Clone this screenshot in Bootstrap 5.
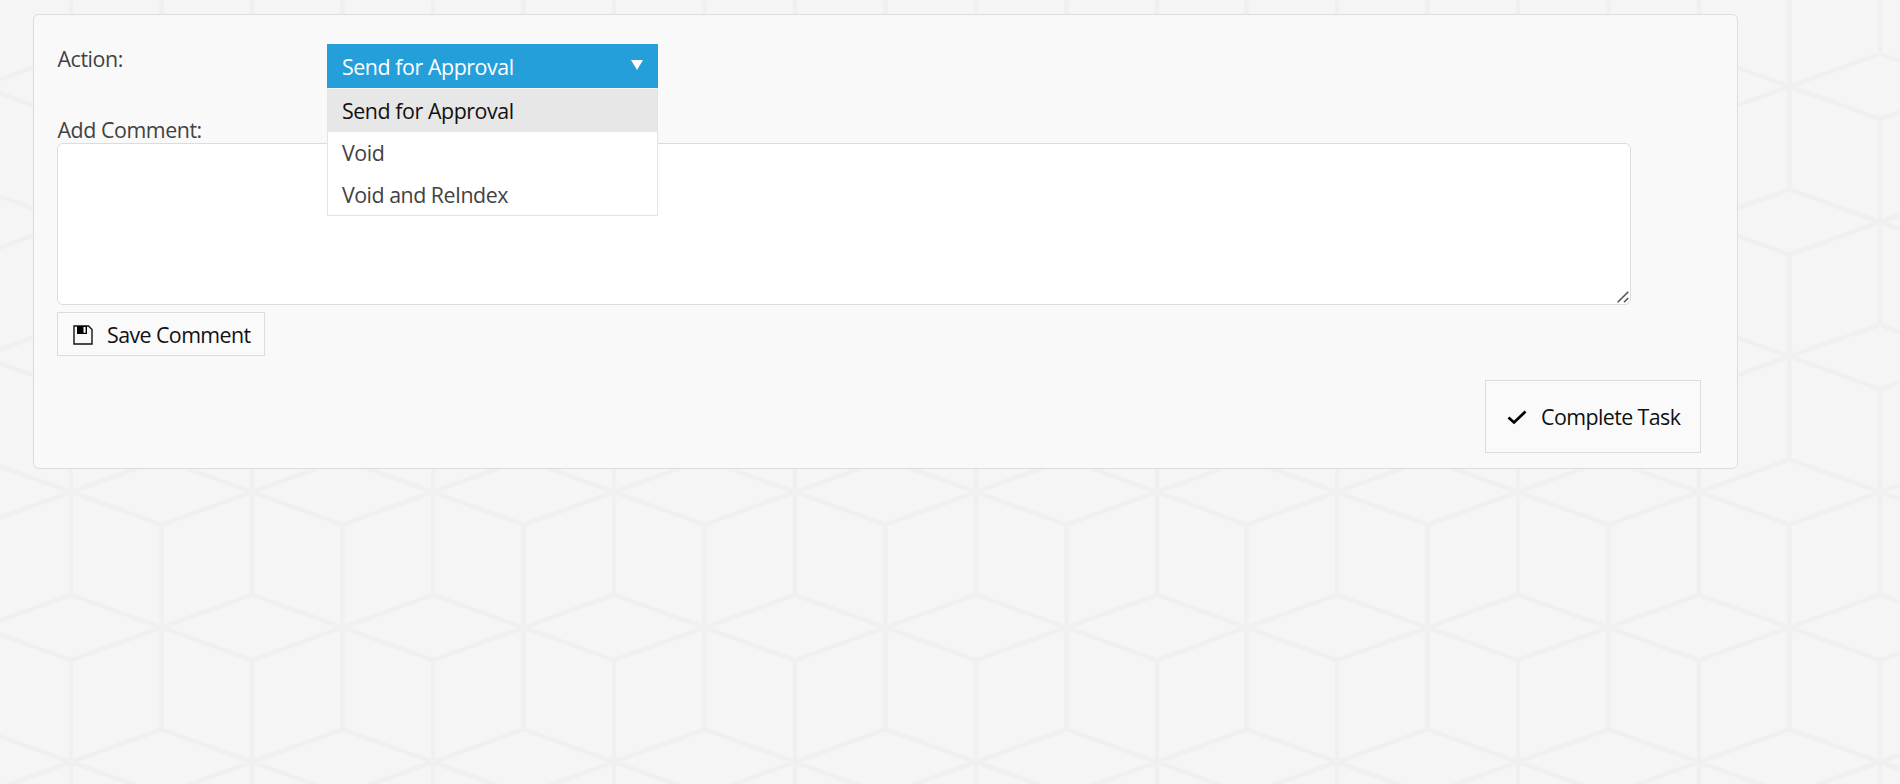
<!DOCTYPE html>
<html lang="en">
<head>
    <meta charset="UTF-8">
    <title>Complete Task</title>
    <link rel="stylesheet" href="https://cdn.jsdelivr.net/npm/bootstrap@5.3.0/dist/css/bootstrap.min.css">
    <style>
        body {
            height: 784px;
            overflow: hidden;
            font-family: "Open Sans", "Noto Sans", sans-serif;
            font-size: 21.4px;
            letter-spacing: -0.44px;
            line-height: 30px;
            color: #424242;
            /* cube pattern tile */
            background: #f5f5f5 url("data:image/svg+xml,%3Csvg xmlns='http://www.w3.org/2000/svg' width='180.9' height='270.3' viewBox='0 0 180.9 270.3'%3E%3Cg fill='none' stroke='%23f0f0f0' stroke-width='4.5'%3E%3Cpath d='M0 0L90.45 32.5L180.9 0M0 270.3L90.45 237.8L180.9 270.3M0 102.6L90.45 135.1L0 167.7M180.9 102.6L90.45 135.1L180.9 167.7'/%3E%3Cpath d='M0 0V102.6M0 167.7V270.3M180.9 0V102.6M180.9 167.7V270.3M90.45 32.5V237.8'/%3E%3C/g%3E%3C/svg%3E") 71.2px -48.5px / 180.9px 270.3px;
        }
        .task-panel {
            width: 1705px;
            height: 455px;
            margin: 14px 0 0 33px;
            padding: 29px 36px 14px 23px;
            background: #f9f9f9;
            border: 1px solid #dcdcdc;
            border-radius: 6px;
        }
        .action-row { height: 71px; }
        .action-label { width: 270px; padding-left: .5px; }
        .action-select { width: 331px; height: 44px; }
        .action-toggle {
            height: 44px;
            padding: 2px 15px 0;
            background: #259fda;
            color: #fff;
        }
        .action-menu {
            top: 44px;
            left: 0;
            z-index: 10;
            border: 1px solid #e4e4e4;
            border-top-color: #f4f4f4;
            background: #fff;
        }
        .action-menu li { height: 42px; padding: 6px 14px 0; }
        .action-menu li:last-child { height: 41px; letter-spacing: -0.5px; }
        .action-menu li.selected { height: 43px; padding-top: 7px; background: #e7e7e7; color: #111; }
        .comment-label { height: 28px; padding-left: .5px; }
        .comment-box { width: 1574px; height: 162px; }
        .comment-box textarea {
            resize: none;
            border: 1px solid #dcdcdc;
            border-radius: 6px;
        }
        .resize-grip { right: 2px; bottom: 2px; }
        .task-btn {
            border: 1px solid #dcdcdc;
            background: #fafafa;
            color: #111;
            font-size: inherit;
            letter-spacing: -0.58px;
            line-height: 30px;
        }
        .save-btn { width: 208px; height: 44px; margin-top: 7px; padding: 2px 0 0 15px; }
        .save-btn span { margin-left: 14px; }
        .complete-btn { width: 216px; height: 73px; margin-top: 24px; padding: 1px 0 0 20px; }
        .complete-btn span { margin-left: 13px; }
    </style>
</head>
<body>
<div class="task-panel">
    <div class="action-row d-flex">
        <label class="action-label">Action:</label>
        <div class="action-select position-relative">
            <div class="action-toggle d-flex justify-content-between align-items-center">
                <span>Send for Approval</span>
                <svg width="12" height="10" viewBox="0 0 12 10" class="mb-1"><path d="M0 0h12L6 10z" fill="#fff"/></svg>
            </div>
            <ul class="action-menu list-unstyled position-absolute w-100 mb-0">
                <li class="selected">Send for Approval</li>
                <li>Void</li>
                <li>Void and ReIndex</li>
            </ul>
        </div>
    </div>

    <label class="comment-label d-block" for="comment">Add Comment:</label>
    <div class="comment-box position-relative">
        <textarea id="comment" class="d-block w-100 h-100"></textarea>
        <svg class="resize-grip position-absolute" width="12" height="12" viewBox="0 0 12 12"><path d="M.7 11.3L11.3 .7M7 11.3L11.3 7" stroke="#555" stroke-width="1.6"/></svg>
    </div>
    <button type="button" class="task-btn save-btn d-flex align-items-center">
        <svg width="20" height="20" viewBox="0 0 20 20">
            <path d="M1 1H15.5L19 4.5V19H1Z" fill="none" stroke="#111" stroke-width="1.4"/>
            <path d="M4 1H14V9H4Z" fill="#000"/>
            <path d="M10.5 2H12.6V7.8H10.5Z" fill="#fff"/>
        </svg>
        <span>Save Comment</span>
    </button>

    <div class="d-flex justify-content-end">
        <button type="button" class="task-btn complete-btn d-flex align-items-center">
            <svg width="22" height="18" viewBox="0 0 22 18"><path d="M2.5 9.5L8 14.5L19.5 3.5" fill="none" stroke="#000" stroke-width="2.7"/></svg>
            <span>Complete Task</span>
        </button>
    </div>
</div>
<script src="https://cdn.jsdelivr.net/npm/bootstrap@5.3.0/dist/js/bootstrap.bundle.min.js"></script>
</body>
</html>
